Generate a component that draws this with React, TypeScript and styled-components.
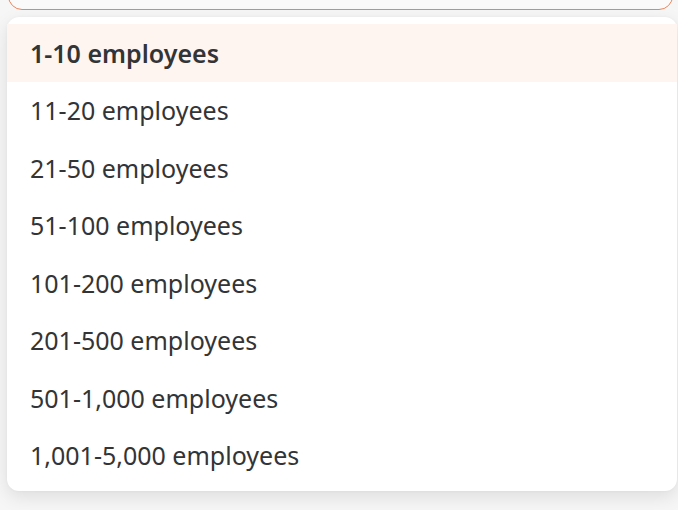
import React from "react";
import styled, { createGlobalStyle } from "styled-components";

const Global = createGlobalStyle`
  html, body { margin: 0; padding: 0; background: #f6f6f6; }
  body { font-family: "Noto Sans", "Open Sans", sans-serif; }
`;

const Page = styled.div`
  width: 678px;
  height: 510px;
  overflow: hidden;
  position: relative;
`;

const Input = styled.div`
  position: absolute;
  left: 8px;
  top: -40px;
  width: 665px;
  height: 50px;
  box-sizing: border-box;
  border: 1px solid #e9865c;
  border-radius: 14px;
  background: #fafafa;
`;

const Menu = styled.ul`
  position: absolute;
  left: 7px;
  top: 17px;
  width: 670px;
  margin: 0;
  padding: 7px 0;
  list-style: none;
  background: #fff;
  border-radius: 12px;
  box-shadow: 0 6px 18px rgba(0, 0, 0, 0.1), 0 0 3px rgba(0, 0, 0, 0.04);
  box-sizing: border-box;
`;

const Option = styled.li<{ $active?: boolean }>`
  height: 57.5px;
  display: flex;
  align-items: center;
  padding: 0 23px;
  font-size: 25px;
  color: #333436;
  font-weight: ${(p) => (p.$active ? 600 : 400)};
  background: ${(p) => (p.$active ? "#fff5f0" : "transparent")};
`;

const options = [
  "1-10 employees",
  "11-20 employees",
  "21-50 employees",
  "51-100 employees",
  "101-200 employees",
  "201-500 employees",
  "501-1,000 employees",
  "1,001-5,000 employees",
];

export default function App() {
  return (
    <Page>
      <Global />
      <Input />
      <Menu>
        {options.map((o, i) => (
          <Option key={o} $active={i === 0}>
            {o}
          </Option>
        ))}
      </Menu>
    </Page>
  );
}
